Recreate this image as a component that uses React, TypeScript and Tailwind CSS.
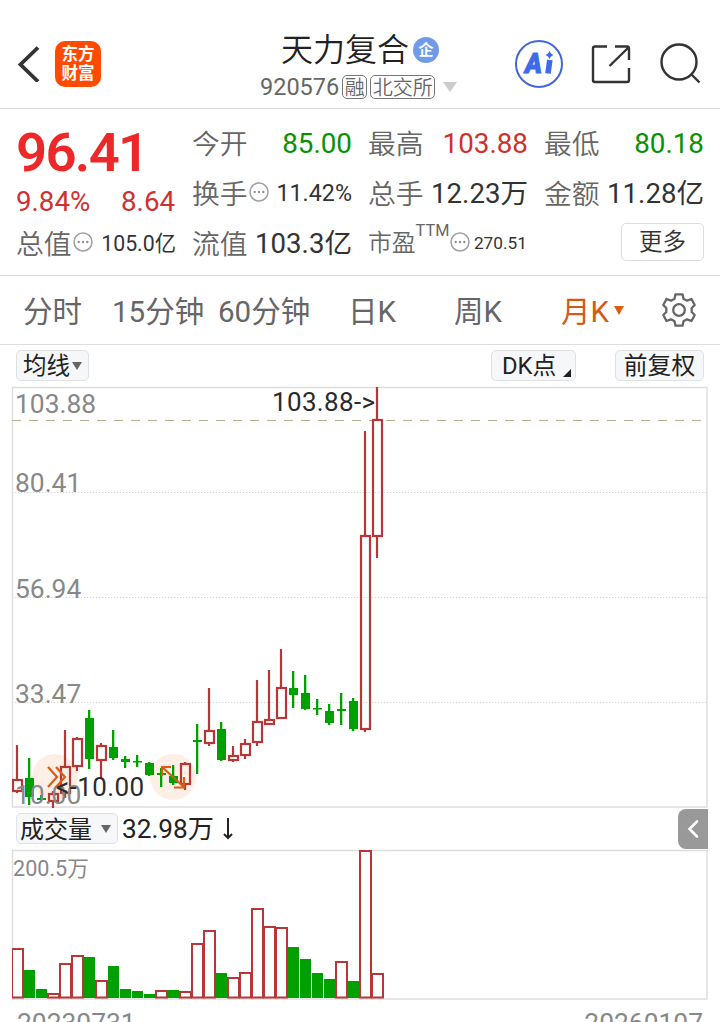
import type {ReactNode} from 'react';

type Candle = {
  up: boolean;
  high: number;
  top: number;
  bottom: number;
  low: number;
  volume: number;
};

const RED = '#b93636';
const GREEN = '#00a000';
const STEP = 12;

// [up, high, top, bottom, low, volume top]
const rows: [number, number, number, number, number, number][] = [
  [1, 745, 779, 792, 793, 948],
  [0, 758, 778, 797, 805, 970],
  [0, 795, 798, 800, 801, 989],
  [1, 791, 793, 802, 808, 993],
  [1, 730, 766, 794, 798, 963],
  [1, 737, 738, 767, 771, 955],
  [0, 710, 718, 759, 769, 957],
  [1, 743, 745, 761, 778, 980],
  [0, 730, 747, 758, 760, 966],
  [0, 756, 759, 762, 768, 989],
  [0, 755, 761, 762.5, 767, 991],
  [0, 762, 763, 775, 776, 994],
  [0, 768, 773, 775, 787, 990],
  [0, 765, 776, 783, 785, 990],
  [1, 762, 763, 785, 790, 991],
  [0, 724, 740, 742, 774, 943],
  [1, 688, 730, 744, 746, 930],
  [0, 722, 729, 760, 761, 973],
  [1, 746, 755, 761, 762, 977],
  [1, 739, 743, 756, 759, 972],
  [1, 680, 721, 743, 746, 908],
  [1, 670, 719, 725, 725, 926],
  [1, 649, 687, 719, 719, 927],
  [0, 671, 688, 695, 708, 947],
  [0, 675, 693, 709, 710, 959],
  [0, 699, 708, 709.5, 715, 973],
  [0, 704, 711, 723, 725, 979],
  [0, 693, 709, 711, 725, 961],
  [0, 698, 701, 729, 731, 981],
  [1, 431, 535, 730, 732, 850],
  [1, 387, 419, 537, 558, 973],
];

const candles: Candle[] = rows.map(([up, high, top, bottom, low, volume]) => ({
  up: up === 1, high, top, bottom, low, volume,
}));

// volume bars drawn as red outlines
const hollowVolume = [0, 3, 4, 5, 7, 12, 14, 15, 16, 18, 19, 20, 21, 22, 27, 29, 30];

const centerX = (index: number) => 17 + index * STEP;

const CandleShape = ({candle, x}: { candle: Candle; x: number }) => {
  if (!candle.up) {
    return (
      <g fill={GREEN}>
        <rect x={x - 1} y={candle.high} width="2.3" height={candle.low - candle.high}/>
        <rect x={x - 4} y={candle.top} width="9" height={candle.bottom - candle.top}/>
      </g>
    );
  }
  return (
    <g fill="none" stroke={RED} strokeWidth="2.2">
      <path d={`M${x} ${candle.high}V${candle.top}M${x} ${candle.bottom}V${candle.low}`}/>
      <rect x={x - 4} y={candle.top + 1} width="9" height={candle.bottom - candle.top - 2}/>
    </g>
  );
};

const PriceChart = () => (
  <svg viewBox="0 386 720 422" className="block h-[422px] w-[720px] shrink-0">
    <clipPath id="price-area"><rect x="12" y="386" width="696" height="422"/></clipPath>
    <path d="M12.5 387.5H707V807H12.5Z" fill="none" stroke="#dddddd" strokeWidth="1.4"/>
    <path d="M12 492.5H707M12 597.5H707M12 702.5H707" stroke="#d4d4d4" strokeDasharray="1.2 1.8"/>
    <path d="M12 420.5H707" stroke="#b9ab90" strokeDasharray="9 8"/>
    <circle cx="55" cy="777" r="23" fill="#fdeee6"/>
    <circle cx="173" cy="777" r="23" fill="#fdeee6"/>
    <g clipPath="url(#price-area)">
      {candles.map((candle, index) => <CandleShape key={index} candle={candle} x={centerX(index)}/>)}
    </g>
    <g fontSize="26.4" fill="#888888">
      <text x="15" y="413">103.88</text>
      <text x="15" y="492">80.41</text>
      <text x="15" y="598">56.94</text>
      <text x="15" y="703">33.47</text>
      <text x="15" y="804">10.00</text>
    </g>
    <g fill="none" stroke="#da5d16" strokeWidth="2.2">
      <path d="M48 767L57 777L48 787M56 767L65 777L56 787"/>
      <path d="M162 776V767H171M162 767L184 787M174 787.5H184V777"/>
    </g>
    <g fontSize="26" fill="#2b2b2b">
      <text x="272" y="411" textLength="103">103.88-&gt;</text>
      <text x="56" y="796" textLength="88">&lt;-10.00</text>
    </g>
  </svg>
);

const VolumeChart = () => (
  <svg viewBox="0 849 720 151" className="block h-[151px] w-[720px] shrink-0">
    <clipPath id="volume-area"><rect x="12" y="849" width="696" height="151"/></clipPath>
    <path d="M12.5 850.5H707V999H12.5Z" fill="none" stroke="#dddddd" strokeWidth="1.4"/>
    <text x="13" y="876" fontSize="21.6" fill="#888888">200.5万</text>
    <g clipPath="url(#volume-area)">
      {candles.map((candle, index) => {
        const x = centerX(index);
        return hollowVolume.includes(index)
          ? <rect key={index} x={x - 5} y={candle.volume + 1} width="11" height={996.5 - candle.volume} fill="none" stroke={RED} strokeWidth="2"/>
          : <rect key={index} x={x - 5} y={candle.volume} width="11" height={998 - candle.volume} fill={GREEN}/>;
      })}
    </g>
  </svg>
);

const Dots = () => (
  <svg viewBox="0 0 20 20" className="mb-[4px] ml-px size-5 shrink-0">
    <circle cx="10" cy="10" r="9" fill="none" stroke="#a0a0a0" strokeWidth="1.5"/>
    <g fill="#909090">
      <circle cx="5.7" cy="10" r="1.2"/>
      <circle cx="10" cy="10" r="1.2"/>
      <circle cx="14.3" cy="10" r="1.2"/>
    </g>
  </svg>
);

type QuoteProps = {
  label: string;
  value: string;
  valueClass?: string;
  children?: ReactNode;
};

const Quote = ({label, value, valueClass = 'text-[27.6px] text-[#333333]', children}: QuoteProps) => (
  <div className="flex h-[50px] items-center justify-between whitespace-nowrap">
    <div className="flex items-center pt-[3px] text-[27.8px] font-[350] text-[#666666]">
      {label}
      {children}
    </div>
    <div className={`pt-[2px] ${valueClass}`}>{value}</div>
  </div>
);

const Header = () => (
  <header className="flex h-[109px] shrink-0 border-b border-[#dddddd] pt-5">
    <div className="flex w-[240px] items-center pl-[17px]">
      <svg viewBox="0 0 24 38" className="mb-[2px] h-[38px] w-6" fill="none" stroke="#333333" strokeWidth="3.8">
        <path d="M21 3.5L3.5 20.5L21 37.5"/>
      </svg>
      <div className="ml-[14px] flex size-[46px] flex-col items-center justify-center rounded-[10px] bg-[#ff4a00] text-[16.5px] leading-[19px] font-bold text-white">
        <span>东方</span>
        <span>财富</span>
      </div>
    </div>
    <div className="flex w-[240px] flex-col pt-2">
      <div className="flex h-[44px] items-center pl-[41px]">
        <span className="text-[32px] leading-[44px] font-[350] text-[#222222]">天力复合</span>
        <span className="ml-[4px] flex size-[26px] items-center justify-center rounded-full bg-[#709be8] text-[15px] font-bold text-white">企</span>
      </div>
      <div className="flex h-[30px] items-center pl-5 text-[#666666]">
        <span className="pt-[2px] text-[23.5px]">920576</span>
        <span className="ml-[3px] flex h-6 w-[25px] items-center justify-center rounded-[5px] border border-[#777777] pt-px text-[20px] font-[350]">融</span>
        <span className="ml-[3px] flex h-6 w-[65px] items-center justify-center rounded-[5px] border border-[#777777] pt-px text-[20px] font-[350]">北交所</span>
        <svg viewBox="0 0 14 10" className="ml-[8px] h-[10px] w-[14px]"><path d="M0 0H14L7 10Z" fill="#cccccc"/></svg>
      </div>
    </div>
    <svg viewBox="0 0 240 88" className="h-[88px] w-[240px]" fill="none">
      <circle cx="59" cy="44" r="23" stroke="#4167d8" strokeWidth="2"/>
      <text x="45" y="53" fontSize="27" fill="#3c6ae8" stroke="#3c6ae8" strokeWidth="1" textLength="17" lengthAdjust="spacingAndGlyphs" className="font-black italic">A</text>
      <path d="M69.8 40L68 53.5" stroke="#3c6ae8" strokeWidth="5.6"/>
      <path d="M69.5 31L71 33.5L73.5 35L71 36.5L69.5 39L68 36.5L65.5 35L68 33.5Z" fill="#3c6ae8"/>
      <g stroke="#333333" strokeWidth="2.4">
        <path d="M127 26.5H115Q113 26.5 113 28.5V60Q113 62 115 62H147Q149 62 149 60V48"/>
        <path d="M135 26.5H147Q149 26.5 149 28.5V40M149 27L129.5 46"/>
        <circle cx="199" cy="42" r="17.5"/>
        <path d="M211 54L219.5 62.5"/>
      </g>
    </svg>
  </header>
);

const Quotes = () => (
  <section className="grid h-[167px] shrink-0 grid-cols-4 content-start gap-x-4 border-b border-[#dddddd] px-4 pt-[9px]">
    <div>
      <div className="flex h-[66px] items-center pt-[2px] text-[54.5px] font-semibold tracking-[-1.7px] text-[#ee2828]">96.41</div>
      <div className="flex h-[34px] items-center justify-between pt-[2px] pr-px text-[27.7px] text-[#d03030]">
        <span>9.84%</span>
        <span>8.64</span>
      </div>
      <Quote label="总值" value="105.0亿" valueClass="text-[21.3px] text-[#333333]"><Dots/></Quote>
    </div>
    <div>
      <Quote label="今开" value="85.00" valueClass="text-[27.8px] text-[#069306]"/>
      <Quote label="换手" value="11.42%" valueClass="text-[23.3px] text-[#333333]"><Dots/></Quote>
      <Quote label="流值" value="103.3亿"/>
    </div>
    <div>
      <Quote label="最高" value="103.88" valueClass="text-[27.8px] text-[#d03030]"/>
      <Quote label="总手" value="12.23万"/>
      <div className="flex h-[50px] items-center justify-between text-[#666666]">
        <div className="flex items-center pt-[2px] text-[23.8px] font-[350]">
          市盈
          <span className="mb-[26px] text-[16.3px] leading-5 font-normal">TTM</span>
          <Dots/>
        </div>
        <span className="pt-[2px] pr-px text-[17.3px] text-[#333333]">270.51</span>
      </div>
    </div>
    <div>
      <Quote label="最低" value="80.18" valueClass="text-[27.8px] text-[#069306]"/>
      <Quote label="金额" value="11.28亿"/>
      <button className="mt-[5px] ml-auto flex h-[38px] w-[83px] items-center justify-center rounded-[5px] border border-[#dddddd] pt-px text-[23.5px] font-[350] text-[#333333]">更多</button>
    </div>
  </section>
);

const Tabs = () => (
  <nav className="flex h-[69px] shrink-0 items-center border-b border-[#dddddd] pl-[23px] text-[29.5px] whitespace-nowrap text-[#666666]">
    <span className="w-[89px] pt-[5px]">分时</span>
    <span className="w-[106px] pt-[5px]">15分钟</span>
    <span className="w-[130px] pt-[5px]">60分钟</span>
    <span className="w-[106px] pt-[5px]">日K</span>
    <span className="w-[107px] pt-[5px]">周K</span>
    <span className="flex w-[100px] items-center text-[#d35a14]">
      <span className="pt-[5px]">月K</span>
      <svg viewBox="0 0 10 9" className="ml-[5px] h-[9px] w-[10px]"><path d="M0 0H10L5 9Z" fill="#da5d16"/></svg>
    </span>
    <svg viewBox="0 0 36 36" className="size-9" fill="none" stroke="#666666" strokeWidth="2.3" strokeLinejoin="round">
      <path d="M14.5 2.3H21.5L22.5 6.7L26 8.7L30.5 7L33.7 13L30.7 16V20L33.7 23L30.5 29L26 27.3L22.5 29.3L21.5 33.7H14.5L13.5 29.3L10 27.3L5.5 29L2.3 23L5.3 20V16L2.3 13L5.5 7L10 8.7L13.5 6.7Z"/>
      <circle cx="18" cy="18" r="5.8"/>
    </svg>
  </nav>
);

const chip = 'flex h-[31px] items-center rounded-[5px] border border-[#dfe1e4] bg-[#f6f7f9] text-[#222222] whitespace-nowrap';

const App = () => {
  return (
    <main className="flex h-[1022px] w-[720px] flex-col overflow-hidden bg-white font-[Roboto,'Noto_Sans_CJK_SC',sans-serif] leading-none">
      <Header/>
      <Quotes/>
      <Tabs/>
      <div className="flex h-[41px] shrink-0 items-center pr-4 pl-4">
        <button className={`${chip} w-[73px] pl-[6px] text-[23.5px]`}>
          <span className="pt-[3px]">均线</span>
          <svg viewBox="0 0 10 8" className="ml-[2px] h-2 w-[10px]"><path d="M0 0H10L5 8Z" fill="#666666"/></svg>
        </button>
        <button className={`${chip} ml-auto w-[85px] pl-[10px] text-[23.8px]`}>
          <span className="pt-[3px]">DK点</span>
          <svg viewBox="0 0 8 8" className="mt-[15px] ml-[7px] size-2"><path d="M8 0V8H0Z" fill="#222222"/></svg>
        </button>
        <button className={`${chip} ml-[39px] w-[89px] justify-center pt-[2px] text-[23.8px]`}>前复权</button>
      </div>
      <PriceChart/>
      <div className="flex h-[41px] shrink-0 items-center pl-4">
        <button className={`${chip} w-[102px] pl-[3px] text-[24px]`}>
          <span className="pt-[2px]">成交量</span>
          <svg viewBox="0 0 10 8" className="ml-[9px] h-2 w-[10px]"><path d="M0 0H10L5 8Z" fill="#666666"/></svg>
        </button>
        <span className="ml-[4px] pt-[2px] text-[26.2px] text-[#222222]">32.98万</span>
        <svg viewBox="0 0 10 22" className="mt-px ml-[9px] h-[22px] w-[10px]" fill="none" stroke="#222222" strokeWidth="2">
          <path d="M5 0V20M1 16L5 20L9 16"/>
        </svg>
        <button className="mr-3 ml-auto flex h-10 w-[30px] items-center justify-center rounded-l-[8px] bg-[#999999]">
          <svg viewBox="0 0 12 20" className="h-5 w-3" fill="none" stroke="white" strokeWidth="2.6" strokeLinecap="round">
            <path d="M10 2.5L2.5 10L10 17.5"/>
          </svg>
        </button>
      </div>
      <VolumeChart/>
      <div className="flex shrink-0 justify-between pt-[8px] pr-[17px] pl-[17px] text-[26.4px] leading-[31px] text-[#888888]">
        <span>20230731</span>
        <span>20260107</span>
      </div>
    </main>
  );
};

export default App;
